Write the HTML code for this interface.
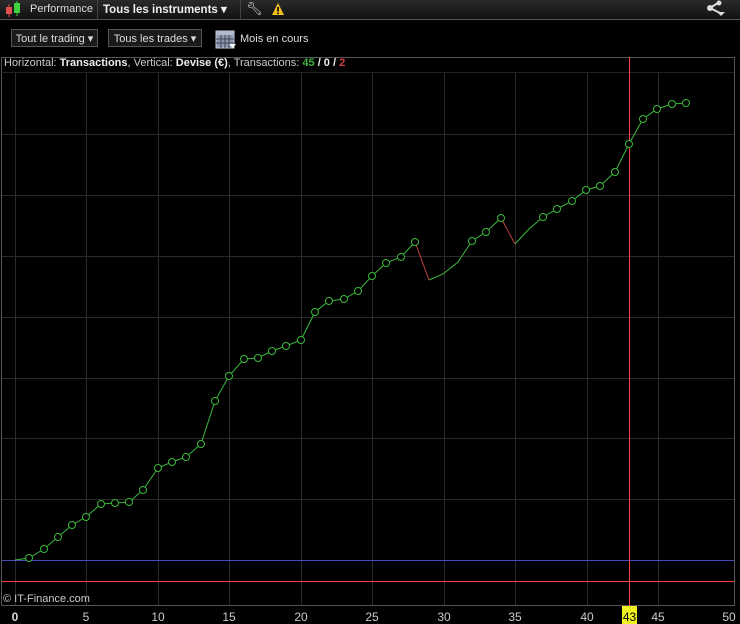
<!DOCTYPE html><html><head><style>
body{margin:0;width:740px;height:624px;background:#000;overflow:hidden;font-family:"Liberation Sans",sans-serif;color:#ddd;position:relative}
.tb{position:absolute;left:0;top:0;width:740px;height:19px;background:linear-gradient(#2a2a2a,#111);border-bottom:1px solid #555}
.tb span{position:absolute;top:3px;font-size:11px}
.sep{position:absolute;top:0;width:1px;height:19px;background:#444}
.btn{position:absolute;top:29px;height:18px;border:1px solid #555;background:#1a1a1a;font-size:11px;line-height:18px;color:#ddd;text-align:center;box-sizing:border-box}
.info{position:absolute;left:0;top:57px;width:735px;height:15px;font-size:11px;line-height:13px;padding-left:4px;color:#ccc}
.info b{color:#eee}
svg{position:absolute;left:0;top:0}
</style></head><body>
<div class="tb">
<svg width="20" height="19" style="left:4px;top:0"><rect x="2" y="7" width="6" height="7" fill="#e05050"/><line x1="5" y1="4" x2="5" y2="17" stroke="#e05050"/><rect x="10" y="3" width="6" height="10" fill="#40d040"/><line x1="13" y1="1" x2="13" y2="16" stroke="#40d040"/></svg>
<span style="left:30px;color:#ddd">Performance</span>
<div class="sep" style="left:97px"></div>
<span style="left:103px;font-weight:bold;color:#eee;font-size:11.5px;top:2px">Tous les instruments ▾</span>
<div class="sep" style="left:240px"></div>
<span style="left:246px;font-size:13px;top:1px">🔧︎</span>
<svg width="14" height="14" style="left:271px;top:2px"><polygon points="7,1 13,13 1,13" fill="#f0c020"/><rect x="6.2" y="5" width="1.6" height="4.5" fill="#000"/><rect x="6.2" y="10.5" width="1.6" height="1.6" fill="#000"/></svg>
<svg width="22" height="19" style="left:706px;top:0"><line x1="4" y1="8" x2="12" y2="3" stroke="#ddd" stroke-width="2"/><line x1="4" y1="8" x2="14" y2="13" stroke="#ddd" stroke-width="2"/><circle cx="4" cy="8" r="3" fill="#ddd"/><circle cx="13" cy="3" r="2.5" fill="#ddd"/><polygon points="11,12 19,12 15,16" fill="#ddd"/></svg>
</div>
<div class="btn" style="left:11px;width:87px">Tout le trading ▾</div>
<div class="btn" style="left:108px;width:94px">Tous les trades ▾</div>
<svg width="22" height="22" style="left:215px;top:28px"><rect x="1" y="3" width="18" height="17" fill="#8a9ab0" stroke="#ccd"/><rect x="1" y="3" width="18" height="4" fill="#b0bccc"/><g stroke="#445" stroke-width="1"><line x1="1" y1="11" x2="19" y2="11"/><line x1="1" y1="15" x2="19" y2="15"/><line x1="6" y1="7" x2="6" y2="20"/><line x1="10" y1="7" x2="10" y2="20"/><line x1="14" y1="7" x2="14" y2="20"/></g><polygon points="14,16 21,16 17.5,20" fill="#fff"/></svg>
<div style="position:absolute;left:240px;top:33px;font-size:11px;color:#ddd">Mois en cours</div>
<svg width="740" height="624">
<g stroke="#2a2a2a" stroke-width="1">
<line x1="15.5" y1="73" x2="15.5" y2="605"/><line x1="86.5" y1="73" x2="86.5" y2="605"/><line x1="158.5" y1="73" x2="158.5" y2="605"/><line x1="229.5" y1="73" x2="229.5" y2="605"/><line x1="301.5" y1="73" x2="301.5" y2="605"/><line x1="372.5" y1="73" x2="372.5" y2="605"/><line x1="444.5" y1="73" x2="444.5" y2="605"/><line x1="515.5" y1="73" x2="515.5" y2="605"/><line x1="587.5" y1="73" x2="587.5" y2="605"/><line x1="658.5" y1="73" x2="658.5" y2="605"/>
<line x1="2" y1="134.5" x2="734" y2="134.5"/><line x1="2" y1="195.5" x2="734" y2="195.5"/><line x1="2" y1="256.5" x2="734" y2="256.5"/><line x1="2" y1="317.5" x2="734" y2="317.5"/><line x1="2" y1="378.5" x2="734" y2="378.5"/><line x1="2" y1="438.5" x2="734" y2="438.5"/><line x1="2" y1="499.5" x2="734" y2="499.5"/>
</g>
<rect x="1.5" y="57.5" width="733" height="548" fill="none" stroke="#555"/>
<line x1="1" y1="72.5" x2="734" y2="72.5" stroke="#222"/>
<line x1="2" y1="560.5" x2="734" y2="560.5" stroke="#4848c0"/>
<rect x="2" y="581" width="732" height="1" fill="#ff4040"/>
<rect x="629" y="57" width="1" height="549" fill="#ff4040"/>
<polyline fill="none" stroke="#3cb83c" stroke-width="1" points="15,560 29,558 44,549 58,537 72,525 86,517 101,504 115,503 129,502 143,490 158,468 172,462 186,457 201,444 215,401 229,376 244,359 258,358 272,351 286,346 301,340 315,312 329,301 344,299 358,291 372,276 386,263 401,257 415,242"/>
<polyline fill="none" stroke="#3cb83c" points="429,280 443,274 458,262 472,241 486,232 501,218"/>
<polyline fill="none" stroke="#3cb83c" points="515,244 529,229 543,217 557,209 572,201 586,190 600,186 615,172 629,144 643,119 657,109 672,104 686,103"/>
<line x1="415" y1="242" x2="429" y2="280" stroke="#c04040"/>
<line x1="501" y1="218" x2="515" y2="244" stroke="#c04040"/>
<g fill="#000" stroke="#3cb83c">
<circle cx="29" cy="558" r="3.5"/><circle cx="44" cy="549" r="3.5"/><circle cx="58" cy="537" r="3.5"/><circle cx="72" cy="525" r="3.5"/><circle cx="86" cy="517" r="3.5"/><circle cx="101" cy="504" r="3.5"/><circle cx="115" cy="503" r="3.5"/><circle cx="129" cy="502" r="3.5"/><circle cx="143" cy="490" r="3.5"/><circle cx="158" cy="468" r="3.5"/><circle cx="172" cy="462" r="3.5"/><circle cx="186" cy="457" r="3.5"/><circle cx="201" cy="444" r="3.5"/><circle cx="215" cy="401" r="3.5"/><circle cx="229" cy="376" r="3.5"/><circle cx="244" cy="359" r="3.5"/><circle cx="258" cy="358" r="3.5"/><circle cx="272" cy="351" r="3.5"/><circle cx="286" cy="346" r="3.5"/><circle cx="301" cy="340" r="3.5"/><circle cx="315" cy="312" r="3.5"/><circle cx="329" cy="301" r="3.5"/><circle cx="344" cy="299" r="3.5"/><circle cx="358" cy="291" r="3.5"/><circle cx="372" cy="276" r="3.5"/><circle cx="386" cy="263" r="3.5"/><circle cx="401" cy="257" r="3.5"/><circle cx="415" cy="242" r="3.5"/>
<circle cx="472" cy="241" r="3.5"/><circle cx="486" cy="232" r="3.5"/><circle cx="501" cy="218" r="3.5"/>
<circle cx="543" cy="217" r="3.5"/><circle cx="557" cy="209" r="3.5"/><circle cx="572" cy="201" r="3.5"/><circle cx="586" cy="190" r="3.5"/><circle cx="600" cy="186" r="3.5"/><circle cx="615" cy="172" r="3.5"/><circle cx="629" cy="144" r="3.5"/><circle cx="643" cy="119" r="3.5"/><circle cx="657" cy="109" r="3.5"/><circle cx="672" cy="104" r="3.5"/><circle cx="686" cy="103" r="3.5"/>
</g>
<rect x="622" y="606" width="15" height="18" fill="#f0f020"/>
<g font-family="Liberation Sans" font-size="12" fill="#ccc" text-anchor="middle">
<text x="15" y="621" font-weight="bold" fill="#ddd">0</text><text x="86" y="621">5</text><text x="158" y="621">10</text><text x="229" y="621">15</text><text x="301" y="621">20</text><text x="372" y="621">25</text><text x="444" y="621">30</text><text x="515" y="621">35</text><text x="587" y="621">40</text><text x="629.5" y="621" fill="#000">43</text><text x="658" y="621">45</text><text x="729" y="621">50</text>
</g>
<text x="3" y="602" font-family="Liberation Sans" font-size="11" fill="#ccc">© IT-Finance.com</text>
</svg>
<div class="info">Horizontal: <b>Transactions</b>, Vertical: <b>Devise (€)</b>, Transactions: <b style="color:#40b040">45</b> <b>/ 0 /</b> <b style="color:#d04040">2</b></div>
</body></html>
